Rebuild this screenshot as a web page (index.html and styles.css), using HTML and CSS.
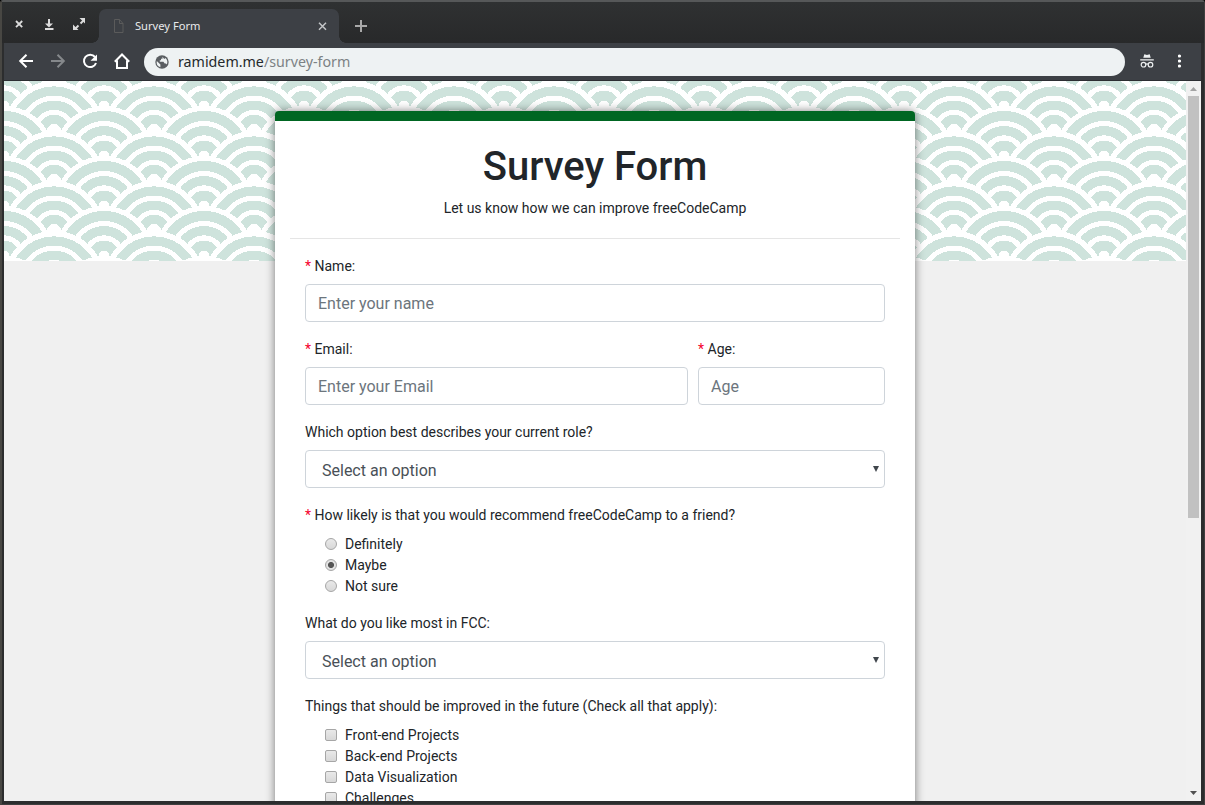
FILE: index.html
```html
<!DOCTYPE html>
<html lang="en">
<head>
<meta charset="utf-8">
<title>Survey Form</title>
<link rel="stylesheet" href="styles.css">
</head>
<body>
<div class="window">
  <header class="titlebar">
    <div class="controls">
      <svg width="100" height="40" viewBox="0 0 100 40" fill="none" stroke="#dcdcdc" stroke-width="1.800">
        <path d="M12 17l6.200 6.200M18.200 17L12 23.200"/>
        <path d="M45 15v6M41 25h8.500" stroke-width="2"/><path d="M41 19.500h8l-4 4z" fill="#dcdcdc" stroke="none"/>
        <path d="M71 25l3.500-3.500M76.500 19.500l3.500-3.500"/><path d="M69 20.500v5.500h5.500zM75.500 14h5.500v5.500z" fill="#dcdcdc" stroke="none"/>
      </svg>
    </div>
    <div class="tab">
      <svg class="page-icon" width="12" height="15" viewBox="0 0 12 15" fill="none" stroke="#5b5b5b"><path d="M1.500 .500h5l3.500 4v9h-8.500zM6.500 .500v4h3.500"/></svg>
      <span class="tab-title">Survey Form</span>
      <svg class="tab-close" width="9" height="9" viewBox="0 0 9 9" stroke="#c4c6c8" stroke-width="1.500"><path d="M1 .700l7 7M8 .700l-7 7"/></svg>
    </div>
    <svg class="new-tab" width="12" height="12" viewBox="0 0 12 12" stroke="#a9a9a9" stroke-width="2"><path d="M6 0v12M0 6h12"/></svg>
  </header>
  <nav class="toolbar">
    <svg class="tool" width="24" height="24" viewBox="0 0 24 24" fill="none" stroke="#fff" stroke-width="2"><path d="M19 12H6.500M12.500 5.700L6.200 12l6.300 6.300"/></svg>
    <svg class="tool" width="24" height="24" viewBox="0 0 24 24" fill="none" stroke="#85888b" stroke-width="2"><path d="M5 12h12.500M11.500 5.700l6.300 6.300-6.300 6.300"/></svg>
    <svg class="tool" width="24" height="24" viewBox="0 0 24 24" fill="none" stroke="#fff" stroke-width="2"><path d="M17 8A6.200 6.200 0 1 0 18 14"/><path d="M19 5.500v6.300h-6.500z" fill="#fff" stroke="none"/></svg>
    <svg class="tool" width="24" height="24" viewBox="0 0 24 24" fill="none" stroke="#fff" stroke-width="2"><path d="M4.800 12.700L12 5.500l7.200 7.200M7 11.500v7.500h10v-7.500"/></svg>
    <div class="omnibox">
      <svg width="14" height="14" viewBox="0 0 14 14"><circle cx="7" cy="7" r="6.700" fill="#5a5e62"/><path d="M1.800 6l3.600 3.500v2.800A5.400 5.400 0 0 1 1.800 6zM7.500 1.700v2H6v1.600H4.800v1.500h3.600l1.300 1.800h1.200l.8 1c1.200-2.300.8-5-1.200-6.700l-1.300 1z" fill="#eef2f3"/></svg>
      <span class="url">ramidem.me<span class="url-path">/survey-form</span></span>
    </div>
    <svg class="incognito" width="14" height="14" viewBox="0 0 14 14" fill="none" stroke="#eef0f1" stroke-width="1.200"><path d="M4.300.300L7 1l2.700-.7 1 3.500H3.300zM.2 5.200h13.600v1.300H.2z" fill="#eef0f1" stroke="none"/><circle cx="3.500" cy="10.700" r="2.300"/><circle cx="10.500" cy="10.700" r="2.300"/><path d="M5.700 10.300q1.300-.8 2.600 0"/></svg>
    <svg class="menu" width="4" height="14" viewBox="0 0 4 14" fill="#fff"><circle cx="1.500" cy="2" r="1.600"/><circle cx="1.500" cy="7" r="1.600"/><circle cx="1.500" cy="12" r="1.600"/></svg>
  </nav>
  <div class="viewport">
    <main class="page">
      <div class="pattern">
        <form class="card">
          <h1>Survey Form</h1>
          <p class="lead">Let us know how we can improve freeCodeCamp</p>
          <hr>
          <div class="fields">
            <div class="group"><label><i>*</i> Name:</label><input type="text" class="control" placeholder="Enter your name"></div>
            <div class="row">
              <div class="group email"><label><i>*</i> Email:</label><input type="text" class="control" placeholder="Enter your Email"></div>
              <div class="group age"><label><i>*</i> Age:</label><input type="text" class="control" placeholder="Age"></div>
            </div>
            <div class="group"><label>Which option best describes your current role?</label><div class="control select">Select an option<span class="caret"></span></div></div>
            <div class="group"><label><i>*</i> How likely is that you would recommend freeCodeCamp to a friend?</label>
              <div class="choice"><span class="radio"></span>Definitely</div>
              <div class="choice"><span class="radio checked"></span>Maybe</div>
              <div class="choice"><span class="radio"></span>Not sure</div>
            </div>
            <div class="group"><label>What do you like most in FCC:</label><div class="control select">Select an option<span class="caret"></span></div></div>
            <div class="group"><label>Things that should be improved in the future (Check all that apply):</label>
              <div class="choice"><span class="check"></span>Front-end Projects</div>
              <div class="choice"><span class="check"></span>Back-end Projects</div>
              <div class="choice"><span class="check"></span>Data Visualization</div>
              <div class="choice"><span class="check"></span>Challenges</div>
            </div>
          </div>
        </form>
      </div>
    </main>
    <div class="scrollbar">
      <svg width="7" height="4" viewBox="0 0 7 4" fill="#a3a3a3"><path d="M0 4L3.500 0 7 4z"/></svg>
      <div class="thumb"></div>
      <svg width="7" height="4" viewBox="0 0 7 4" fill="#505050"><path d="M0 0h7L3.500 4z"/></svg>
    </div>
  </div>
</div>
</body>
</html>
```
FILE: styles.css
```css
* { box-sizing: border-box; }
body { margin: 0; background: #000; overflow: hidden; }
svg { display: block; flex: none; }
.window {
  width: 1205px; height: 805px;
  display: flex; flex-direction: column;
  background: #2c2d2e;
  border: 1px solid #3f3f3f; border-top: 2px solid #565859; border-left: 2px solid #484743;
  border-radius: 3px 3px 0 0;
  padding: 0 3px 3px 2px;
}
.titlebar {
  height: 41px; flex: none; display: flex; align-items: flex-start;
  margin: 0 -3px 0 -2px; padding-left: 2px;
  background: linear-gradient(#2f3132, #28292a);
}
.controls { width: 95px; padding-top: 2px; height: 41px; overflow: hidden; }
.tab {
  width: 240px; height: 34px; margin-top: 7px; padding-left: 14px;
  display: flex; align-items: center;
  background: #3d4045; border-radius: 7px 7px 0 0;
  position: relative;
}
.tab::before, .tab::after {
  content: ""; position: absolute; bottom: 0; width: 7px; height: 7px;
}
.tab::before { left: -7px; background: radial-gradient(circle at 0 0, transparent 6.5px, #3d4045 7px); }
.tab::after { right: -7px; background: radial-gradient(circle at 100% 0, transparent 6.5px, #3d4045 7px); }
.page-icon { margin-top: 1px; }
.tab-title { margin-left: 10px; flex: 1; font: 11.15px/16px "Noto Sans", sans-serif; color: #e9eaeb; }
.tab-close { margin-right: 12px; }
.new-tab { margin: 18px 0 0 16px; }
.toolbar {
  height: 38px; flex: none; display: flex; align-items: center;
  background: #3d4045; border-bottom: 1px solid #2c2e32;
  padding-left: 10px;
}
.tool { margin: 0 8px 2px 0; }
.omnibox {
  width: 981px; height: 28px; margin-left: 2px; padding-left: 11px;
  display: flex; align-items: center;
  background: #eef2f3; border-radius: 14px;
}
.url { margin-left: 9px; font: 14.25px/20px "Noto Sans", sans-serif; color: #24292b; }
.url-path { color: #7c8184; }
.incognito { margin: 0 0 1px 15px; }
.menu { margin: 0 0 1px 24px; }
.viewport { flex: none; height: 720px; width: 1197px; display: flex; overflow: hidden; background: #f0f0f0; }
.page { width: 1182px; height: 720px; background: #f0f0f0; }
.pattern {
  height: 180px; padding-top: 30px;
  --g: #cee3dc;
  background-color: var(--g);
  background-image:
    radial-gradient(circle at 100% 150%, var(--g) 24%, #fff 24%, #fff 28%, var(--g) 28%, var(--g) 36%, #fff 36%, #fff 40%, transparent 40%),
    radial-gradient(circle at 0 150%, var(--g) 24%, #fff 24%, #fff 28%, var(--g) 28%, var(--g) 36%, #fff 36%, #fff 40%, transparent 40%),
    radial-gradient(circle at 50% 100%, #fff 10%, var(--g) 10%, var(--g) 23%, #fff 23%, #fff 30%, var(--g) 30%, var(--g) 43%, #fff 43%, #fff 50%, var(--g) 50%, var(--g) 63%, #fff 63%, #fff 71%, transparent 71%),
    radial-gradient(circle at 100% 50%, #fff 5%, var(--g) 5%, var(--g) 15%, #fff 15%, #fff 20%, var(--g) 20%, var(--g) 29%, #fff 29%, #fff 34%, var(--g) 34%, var(--g) 44%, #fff 44%, #fff 49%, transparent 49%),
    radial-gradient(circle at 0 50%, #fff 5%, var(--g) 5%, var(--g) 15%, #fff 15%, #fff 20%, var(--g) 20%, var(--g) 29%, #fff 29%, #fff 34%, var(--g) 34%, var(--g) 44%, #fff 44%, #fff 49%, transparent 49%);
  background-size: 100px 50px;
}
.card {
  width: 640px; height: 760px; margin: 0 auto; padding: 22px 15px 0;
  background: #fff; border-top: 10px solid #006622; border-radius: 4px;
  box-shadow: 0 0 10px rgba(0, 0, 0, .5);
  font: 14px/21px Roboto, sans-serif; color: #212529;
}
h1 { margin: 0 0 7px; font-size: 40px; font-weight: 500; line-height: 48px; text-align: center; }
.lead { margin: 0; text-align: center; }
hr { margin: 19px 0 17px; border: 0; border-top: 1px solid #e5e5e5; }
.fields { padding: 0 15px; }
.group { margin-bottom: 16px; }
label { display: block; margin-bottom: 7px; }
.group + .group, .row + .group { padding-top: 1px; }
.row { display: flex; gap: 10px; padding-top: 1px; }
.row .group { padding-top: 0; }
label i { font-style: normal; color: #f5002d; }
.email { width: 383px; }
.age { width: 187px; }
.control {
  display: block; width: 100%; height: 38px; padding: 6px 12px;
  font: 16px/24px Roboto, sans-serif; color: #495057;
  background: #fff; border: 1px solid #ced4da; border-radius: 4px;
}
.control::placeholder { color: #6c757d; opacity: 1; }
.select { display: flex; justify-content: space-between; padding: 8px 5px 4px 16px; }
.caret { width: 6px; height: 6px; margin-top: 7px; background: #40464c; clip-path: polygon(0 0, 100% 0, 50% 100%); }
.choice { display: flex; align-items: flex-start; height: 21px; padding: 0 0 0 20px; }
label + .choice { margin-top: 8px; }
.radio, .check {
  width: 12px; height: 12px; margin: 4px 8px 0 0; border: 1px solid #a6a6a6;
  background: linear-gradient(#e9e9e9, #d8d8d8);
}
.radio { border-radius: 50%; }
.checked { background: radial-gradient(circle, #555 2.7px, #e2e2e2 3.3px); }
.check { border-radius: 2px; }
.group:has(.choice) { margin-bottom: 15px; }
.scrollbar {
  width: 15px; height: 720px; padding: 6px 0; background: #f1f1f1;
  display: flex; flex-direction: column; align-items: center; justify-content: space-between;
}
.thumb { width: 11px; height: 422px; margin: 5px 0 auto; background: #c1c1c1; }
```
